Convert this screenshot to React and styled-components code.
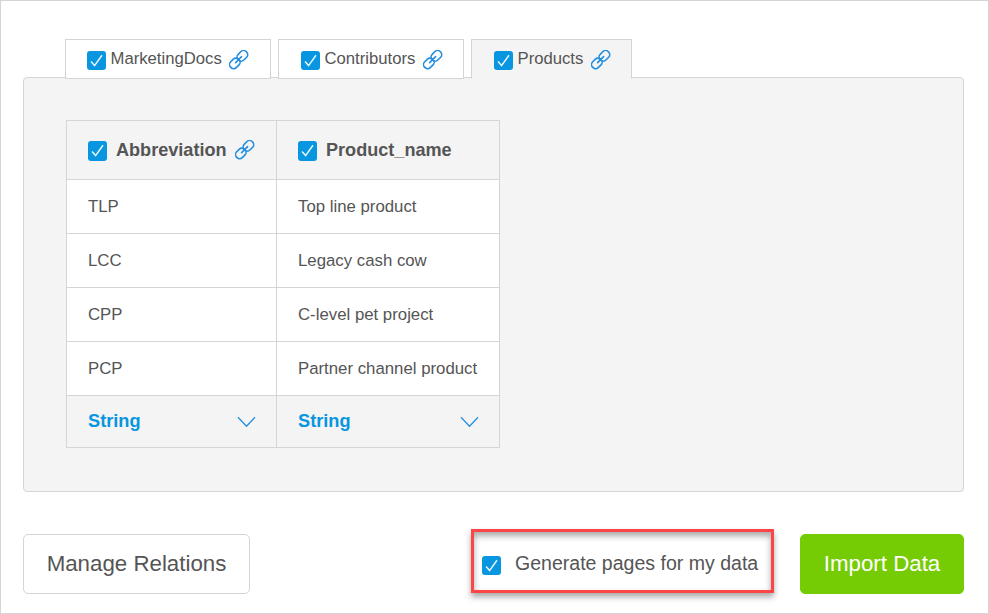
import React from "react";
import styled, { createGlobalStyle } from "styled-components";

const GlobalStyle = createGlobalStyle`
  * { box-sizing: border-box; }
  body { margin: 0; background: #fff; }
`;

const Page = styled.main`
  display: flex;
  flex-direction: column;
  width: 989px;
  height: 614px;
  padding: 38px 24px 19px 22px;
  border: 1px solid #d5d5d5;
  color: #555;
  font-family: "Liberation Sans", Arial, sans-serif;
`;

const Tabs = styled.nav`
  display: flex;
  gap: 7px;
  height: 40px;
  margin: 0 0 -2px 42px;
  z-index: 1;
`;

const Tab = styled.div`
  display: flex;
  width: ${(p) => p.$width}px;
  height: 40px;
  padding: 0 0 0 21px;
  border: 1px solid #d5d5d5;
  border-bottom-color: ${(p) => (p.$active ? "#f4f4f4" : "#d5d5d5")};
  background: ${(p) => (p.$active ? "#f4f4f4" : "#fff")};
  ${(p) => p.$inset && `padding-left: ${p.$inset}px;`}
`;

const TabLabel = styled.span`
  margin: 0 7.5px 0 4.5px;
  font-size: 16.7px;
  line-height: 37px;
  white-space: nowrap;
`;

const CheckBox = styled.span`
  display: flex;
  flex: none;
  width: 19px;
  height: ${(p) => p.$height || 19}px;
  margin-top: ${(p) => p.$top || 0}px;
  border-radius: 3px;
  background: #0796df;
  svg { display: block; width: 19px; height: 19px; }
`;

const LinkSvg = styled.svg`
  flex: none;
  display: block;
  width: 20px;
  height: 20px;
  margin-top: ${(p) => p.$top || 0}px;
`;

const Panel = styled.section`
  height: 415px;
  padding: 42px;
  border: 1px solid #d5d5d5;
  border-radius: 4px;
  background: #f4f4f4;
`;

const Table = styled.div`
  display: grid;
  grid-template-columns: 210px 223px;
  grid-template-rows: 59px repeat(4, 54px) 52px;
  width: 434px;
  border: solid #d5d5d5;
  border-width: 1px 0 0 1px;
`;

const Cell = styled.div`
  padding-left: 21px;
  border: solid #d5d5d5;
  border-width: 0 1px 1px 0;
  background: #fff;
  font-size: 16.8px;
  line-height: 54px;
  white-space: nowrap;
`;

const HeadCell = styled(Cell)`
  display: flex;
  background: #f4f4f4;
  font-size: 18.1px;
  font-weight: bold;
  line-height: 58px;
`;

const HeadLabel = styled.span`
  margin: 0 8.5px 0 9px;
`;

const TypeCell = styled(Cell)`
  display: flex;
  justify-content: space-between;
  padding-right: 20px;
  background: #f4f4f4;
  color: #0796df;
  font-size: 18.2px;
  font-weight: bold;
  line-height: 50px;
`;

const Arrow = styled.svg`
  display: block;
  width: 19px;
  height: 12px;
  margin-top: 20px;
`;

const Footer = styled.footer`
  display: flex;
  height: 60px;
  margin-top: 42px;
`;

const Button = styled.button`
  width: ${(p) => p.$width}px;
  height: 60px;
  padding: 0;
  border: 1px solid ${(p) => (p.$primary ? "#76cc04" : "#d5d5d5")};
  border-radius: 5px;
  background: ${(p) => (p.$primary ? "#76cc04" : "#fff")};
  color: ${(p) => (p.$primary ? "#fff" : "#555")};
  font: 22.3px/58px "Liberation Sans", Arial, sans-serif;
  white-space: nowrap;
`;

const Option = styled.label`
  display: flex;
  width: 303px;
  height: 64px;
  margin: -5px 26px 0 auto;
  padding-left: 8px;
  border: 3px solid #fb4547;
  box-shadow: 0 4px 6px rgba(0, 0, 0, 0.34), inset 0 4px 6px rgba(0, 0, 0, 0.34);
  font-size: 19.55px;
  line-height: 62px;
  white-space: nowrap;
`;

const OptionLabel = styled.span`
  margin-left: 14px;
`;

function Check({ top, height }) {
  return (
    <CheckBox $top={top} $height={height}>
      <svg viewBox="0 0 19 19" fill="none">
        <path d="M4 10.6 7.6 14.6 15 4.2" stroke="#e9f6fd" strokeWidth="1.5" />
      </svg>
    </CheckBox>
  );
}

function Link({ top }) {
  return (
    <LinkSvg $top={top} viewBox="0 0 20 20" fill="none" stroke="#238ee0" strokeWidth="1.6" strokeLinecap="round">
      <g transform="translate(9.6 9.6) rotate(-45)">
        <rect x="-11" y="-4" width="11.2" height="8" rx="3.6" />
        <rect x="-0.2" y="-4" width="11.2" height="8" rx="3.6" />
        <path d="M-4.2 0H4.2" />
      </g>
    </LinkSvg>
  );
}

function Chevron() {
  return (
    <Arrow viewBox="0 0 19 12" fill="none">
      <path d="M1 1.2 9.5 10.2 18 1.2" stroke="#2690df" strokeWidth="1.3" />
    </Arrow>
  );
}

const tabs = [
  { name: "MarketingDocs", width: 206 },
  { name: "Contributors", width: 186, inset: 22 },
  { name: "Products", width: 161, inset: 22, active: true },
];

const rows = [
  ["TLP", "Top line product"],
  ["LCC", "Legacy cash cow"],
  ["CPP", "C-level pet project"],
  ["PCP", "Partner channel product"],
];

export default function App() {
  return (
    <>
      <GlobalStyle />
      <Page>
        <Tabs>
          {tabs.map((tab) => (
            <Tab key={tab.name} $width={tab.width} $active={tab.active} $inset={tab.inset}>
              <Check top={11} />
              <TabLabel>{tab.name}</TabLabel>
              <Link top={10} />
            </Tab>
          ))}
        </Tabs>
        <Panel>
          <Table>
            <HeadCell>
              <Check top={20} height={20} />
              <HeadLabel>Abbreviation</HeadLabel>
              <Link top={19} />
            </HeadCell>
            <HeadCell>
              <Check top={20} height={20} />
              <HeadLabel>Product_name</HeadLabel>
            </HeadCell>
            {rows.flat().map((text) => (
              <Cell key={text}>{text}</Cell>
            ))}
            <TypeCell>String<Chevron /></TypeCell>
            <TypeCell>String<Chevron /></TypeCell>
          </Table>
        </Panel>
        <Footer>
          <Button $width={227}>Manage Relations</Button>
          <Option>
            <Check top={24} />
            <OptionLabel>Generate pages for my data</OptionLabel>
          </Option>
          <Button $width={164} $primary>Import Data</Button>
        </Footer>
      </Page>
    </>
  );
}
